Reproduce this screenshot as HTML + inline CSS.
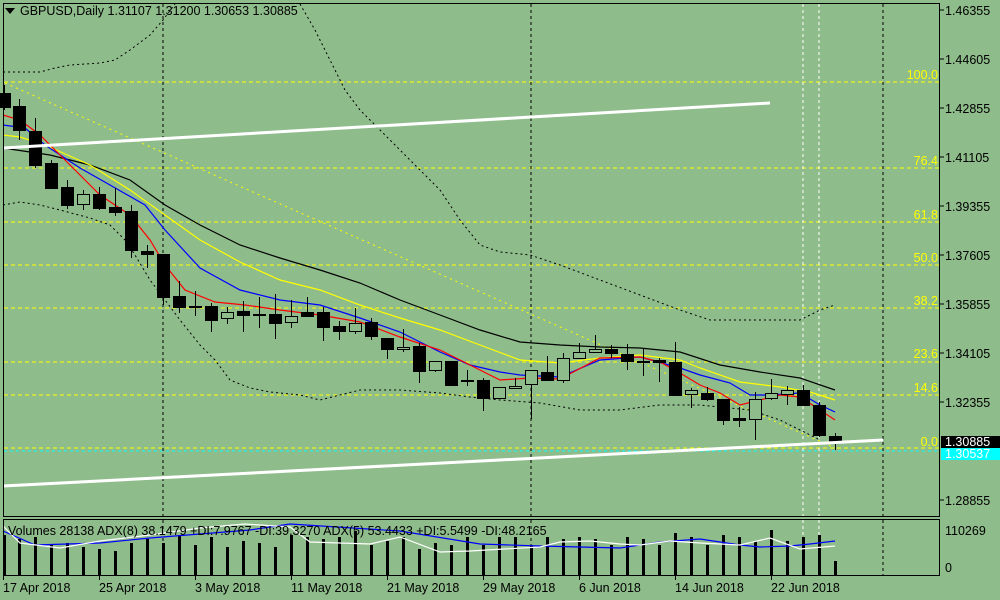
<!DOCTYPE html><html><head><style>
body{margin:0;background:#8fbc8b;width:1000px;height:600px;overflow:hidden}
svg{display:block}
text{font-family:"Liberation Sans",sans-serif;font-size:12.5px}
</style></head><body>
<svg id="s" width="1000" height="600" xmlns="http://www.w3.org/2000/svg">
<rect width="1000" height="600" fill="#8fbc8b"/>
<g id="grid"></g>
<g stroke="#ffff00" stroke-dasharray="4,3" fill="none">
<line x1="4" y1="82" x2="939" y2="82"/><line x1="4" y1="168" x2="939" y2="168"/><line x1="4" y1="222" x2="939" y2="222"/><line x1="4" y1="265" x2="939" y2="265"/><line x1="4" y1="308" x2="939" y2="308"/><line x1="4" y1="362" x2="939" y2="362"/><line x1="4" y1="395" x2="939" y2="395"/><line x1="4" y1="448" x2="939" y2="448"/>
<line x1="5" y1="83" x2="840" y2="450" stroke-dasharray="2,4"/>
</g>
<line x1="4" y1="451" x2="939" y2="451" stroke="#00ffff" stroke-dasharray="3,3"/>
<g stroke="#000" stroke-dasharray="3,3"><line x1="163" y1="4" x2="163" y2="576"/><line x1="531" y1="4" x2="531" y2="576"/><line x1="883" y1="4" x2="883" y2="576"/></g>
<g stroke="#fff" stroke-dasharray="3,3"><line x1="803" y1="4" x2="803" y2="576"/><line x1="819" y1="4" x2="819" y2="576"/></g>
<g fill="none" stroke-dasharray="2,3" stroke="#000">
<polyline points="3,72 40,72 55,68 70,65 100,63 115,60 130,50 150,35 163,20 175,4"/>
<polyline points="300,4 315,30 330,60 345,90 360,110 380,130 400,150 420,170 440,190 460,220 480,245 500,252 530,255 560,265 600,280 640,295 680,310 710,320 760,320 800,320 820,310 835,305"/>
<polyline points="3,205 20,202 40,205 60,210 90,218 110,225 125,240 135,255 150,280 165,300 180,320 200,345 215,360 230,380 250,388 270,392 300,395 320,400 360,390 400,390 440,393 470,397 500,400 540,403 580,410 620,410 660,405 700,405 720,407 750,410 780,420 800,430 820,440"/>
</g>
<g fill="none" stroke-width="1.2">
<polyline stroke="#000" points="3,148 50,155 90,165 130,180 165,205 200,225 240,245 280,258 320,270 360,283 400,300 440,315 480,330 520,342 560,345 600,347 640,348 680,352 720,365 760,372 800,378 835,390"/>
<polyline stroke="#ffff00" points="3,135 20,137 45,145 90,165 130,190 165,215 200,240 240,262 280,280 320,290 360,305 400,318 440,330 480,345 520,360 560,363 600,358 640,355 680,360 700,368 740,382 780,387 810,392 835,400"/>
<polyline stroke="#0000ff" points="3,125 25,128 45,145 80,168 110,185 145,205 165,230 200,268 240,290 280,300 320,305 360,318 400,332 440,352 470,365 500,372 520,375 560,377 600,360 640,357 680,368 700,375 730,383 750,395 770,395 800,393 820,405 835,412"/>
<polyline stroke="#ff0000" points="3,115 20,120 40,135 60,155 100,195 130,215 150,240 165,265 185,290 215,302 245,305 280,310 320,315 360,322 400,337 440,350 470,365 500,380 530,378 560,379 600,358 640,357 660,362 680,373 700,385 720,393 740,405 760,400 780,395 800,397 820,410 835,420"/>
</g>
<g id="c"></g>
<g stroke="#fff" stroke-width="3"><line x1="3" y1="148" x2="770" y2="103"/><line x1="3" y1="486" x2="883" y2="440"/></g>
<g id="v"></g>
<g fill="none" stroke-width="1.2">
<polyline stroke="#0000ff" points="3,531 35,545 100,543 150,538 250,530 290,524 400,531 480,544 540,546 620,548 660,542 700,539 740,545 760,547 790,546 810,544 835,541"/>
<polyline stroke="#fff" points="3,526 20,543 60,548 100,541 150,535 200,528 245,524 290,527 310,542 370,544 400,537 440,552 470,551 540,547 560,542 590,541 620,544 640,545 670,541 700,543 740,545 770,538 800,549 835,546"/>
</g>
<g fill="none" stroke="#000"><rect x="3.5" y="3.5" width="936" height="513"/><rect x="3.5" y="519.5" width="936" height="56"/></g>
<g fill="#000">
<path d="M5 8h10l-5 6z"/>
<text x="20" y="15">GBPUSD,Daily  1.31107 1.31200 1.30653 1.30885</text>
<text x="8" y="535">Volumes 28138  ADX(8) 38.1479 +DI:7.9767 -DI:39.3270  ADX(5) 53.4433 +DI:5.5499 -DI:48.2165</text>
<g id="ax"></g>
<text x="945" y="535">110269</text><text x="945" y="572">0</text>
</g>
<g fill="#ffff00" text-anchor="end">
<text x="938" y="79">100.0</text><text x="938" y="165">76.4</text><text x="938" y="219">61.8</text><text x="938" y="262">50.0</text><text x="938" y="305">38.2</text><text x="938" y="358">23.6</text><text x="938" y="392">14.6</text><text x="938" y="446">0.0</text>
</g>
<rect x="941" y="436" width="59" height="12" fill="#000"/><text x="945" y="446" fill="#fff">1.30885</text>
<rect x="941" y="448" width="59" height="12" fill="#00ffff"/><text x="945" y="458" fill="#fff">1.30537</text>
</svg>
<script>
var N="http://www.w3.org/2000/svg";
function el(p,t,a,tx){var e=document.createElementNS(N,t);for(var k in a)e.setAttribute(k,a[k]);if(tx)e.textContent=tx;document.getElementById(p).appendChild(e);}
var C=[[4,93,107,85,110,0],[19,106,130,99,140,0],[35,131,165,118,168,0],[51,163,188,160,188,0],[67,187,205,180,209,0],[83,194,204,190,210,1],[99,194,208,187,210,0],[115,207,212,188,216,0],[131,211,250,205,258,0],[147,251,254,245,268,0],[163,254,297,254,305,0],[179,296,307,281,313,0],[195,306,306,291,316,0],[211,306,320,303,332,0],[227,312,318,307,324,1],[243,311,315,301,332,0],[259,314,314,297,328,0],[275,314,323,294,339,0],[291,316,322,300,328,1],[307,312,316,297,316,0],[323,312,327,307,341,0],[339,326,331,321,340,0],[355,323,331,308,334,1],[371,322,336,318,340,0],[387,338,349,338,359,0],[403,347,349,329,352,1],[419,346,371,343,383,0],[435,361,370,361,372,1],[451,361,385,361,385,0],[467,380,380,370,386,0],[483,380,398,378,411,0],[499,387,398,387,398,1],[515,386,388,378,389,1],[531,370,384,370,419,1],[547,372,380,356,381,0],[563,358,380,353,383,1],[579,352,358,343,358,1],[595,349,352,335,353,1],[611,349,353,345,358,0],[627,354,361,344,370,0],[643,361,362,349,376,0],[659,360,362,358,382,0],[675,362,395,342,395,0],[691,390,394,388,408,1],[707,393,399,387,401,0],[723,399,420,399,425,0],[739,418,420,407,427,0],[755,399,419,392,440,1],[771,393,398,379,400,1],[787,390,394,386,405,1],[803,390,405,385,405,0],[819,405,435,402,437,0],[835,436,442,433,450,0]];
var V=[40,36,38,30,32,28,26,24,32,36,32,40,30,38,28,34,32,28,40,38,36,38,44,30,34,38,26,32,30,38,30,38,38,30,38,36,38,36,30,38,36,30,42,38,30,40,38,34,45,34,38,40,14];
C.forEach(function(c,i){var x=c[0];
el("c","line",{x1:x+.5,y1:c[3],x2:x+.5,y2:c[4],stroke:"#000"});
var h=Math.max(1,c[2]-c[1]);
el("c","rect",{x:x-5.5,y:c[1]+.5,width:12,height:h,fill:c[5]?"#8fbc8b":"#000",stroke:"#000"});
el("v","rect",{x:x-1,y:575-V[i],width:3,height:V[i],fill:"#000"});});
var P=[[10,"1.46355"],[59,"1.44605"],[108,"1.42855"],[157,"1.41105"],[206,"1.39355"],[255,"1.37605"],[304,"1.35855"],[353,"1.34105"],[402,"1.32355"],[500,"1.28855"]];
P.forEach(function(p){el("ax","text",{x:945,y:p[0]+5},p[1]);el("ax","line",{x1:940,y1:p[0],x2:944,y2:p[0],stroke:"#000"});});
[["17 Apr 2018",3],["25 Apr 2018",99],["3 May 2018",195],["11 May 2018",291],["21 May 2018",387],["29 May 2018",483],["6 Jun 2018",579],["14 Jun 2018",675],["22 Jun 2018",771]].forEach(function(d){el("ax","text",{x:d[1],y:592},d[0]);el("ax","line",{x1:d[1]+.5,y1:576,x2:d[1]+.5,y2:580,stroke:"#000"});});
</script>
</body></html>
